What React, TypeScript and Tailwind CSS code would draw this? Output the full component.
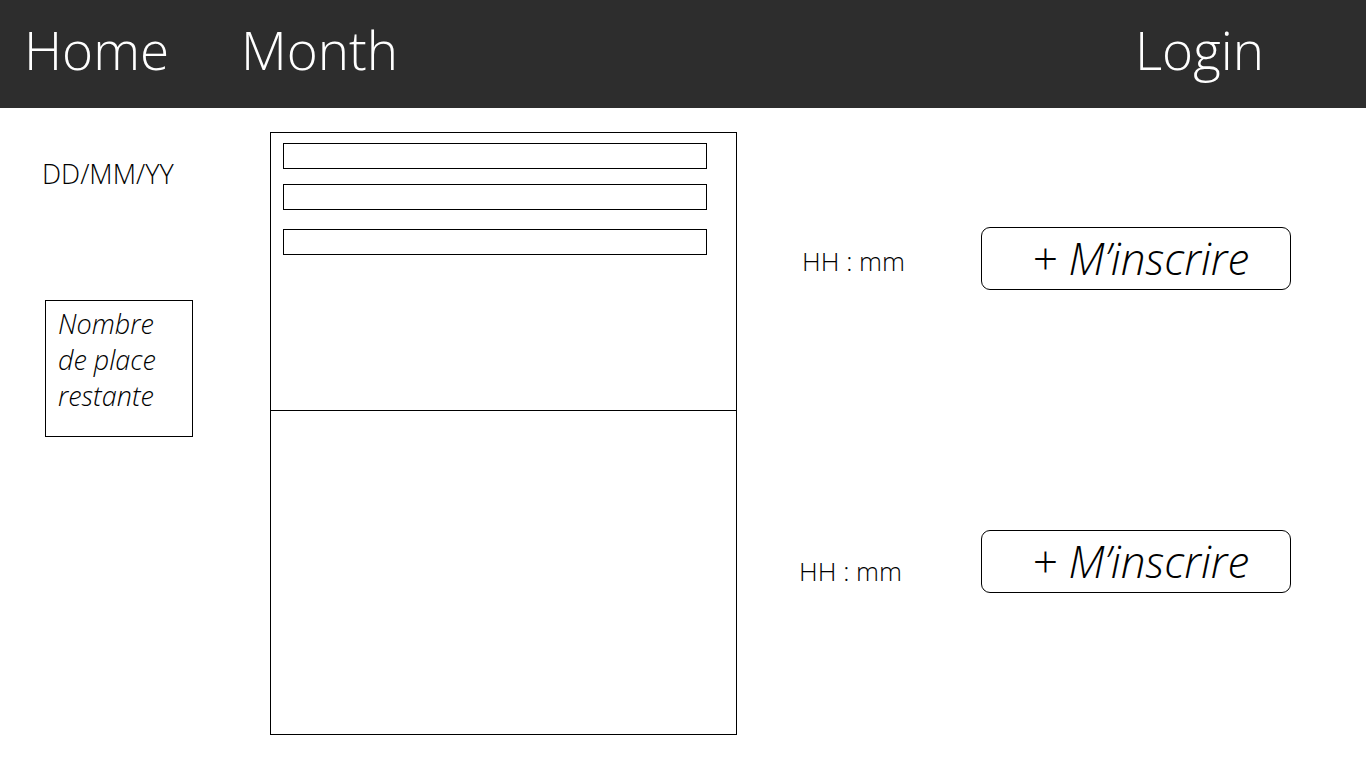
const font = { fontFamily: '"Open Sans", "Noto Sans", sans-serif' };

function SlotRow({ textOffset, mt }: { textOffset: string; mt: string }) {
  return (
    <div className={`flex items-start ${mt}`}>
      <div className={`w-[179px] text-[26px] leading-none text-black font-light ${textOffset}`}>HH : mm</div>
      <button className="w-[310px] h-[63px] rounded-[9px] border border-black flex items-center pl-[50px] pb-[2px] text-[44px] italic font-light text-black leading-none">
        + M’inscrire
      </button>
    </div>
  );
}

export default function App() {
  return (
    <div className="w-[1366px] h-[768px] bg-white overflow-hidden" style={font}>
      {/* Header */}
      <header className="h-[108px] bg-[#2d2d2d] flex items-center pb-[10px] text-white font-light text-[53px] leading-none">
        <div className="pl-[24px] w-[241px]">Home</div>
        <div>Month</div>
        <div className="ml-auto mr-[102px]">Login</div>
      </header>

      <main className="flex">
        {/* Left column */}
        <div className="w-[270px] pl-[42px] pt-[52px]">
          <div className="text-[27px] leading-none font-light text-black">DD/MM/YY</div>
          <div className="mt-[113px] ml-[3px] w-[148px] h-[137px] border border-black pl-[12px] pt-[5px] text-[27px] leading-[36px] italic font-light text-black">
            Nombre
            <br />
            de place
            <br />
            restante
          </div>
        </div>

        {/* Center panel */}
        <div className="mt-[24px] w-[467px] h-[603px] border border-black flex flex-col">
          <div className="h-[278px] border-b border-black pl-[12px] pt-[10px] flex flex-col">
            <div className="w-[424px] h-[26px] border border-black" />
            <div className="mt-[15px] w-[424px] h-[26px] border border-black" />
            <div className="mt-[19px] w-[424px] h-[26px] border border-black" />
          </div>
          <div className="flex-1" />
        </div>

        {/* Right column */}
        <div className="pl-[65px] pt-[119px] flex flex-col">
          <SlotRow textOffset="mt-[21px]" mt="" />
          <SlotRow textOffset="mt-[28px] -ml-[3px] mr-[3px]" mt="mt-[240px]" />
        </div>
      </main>
    </div>
  );
}
